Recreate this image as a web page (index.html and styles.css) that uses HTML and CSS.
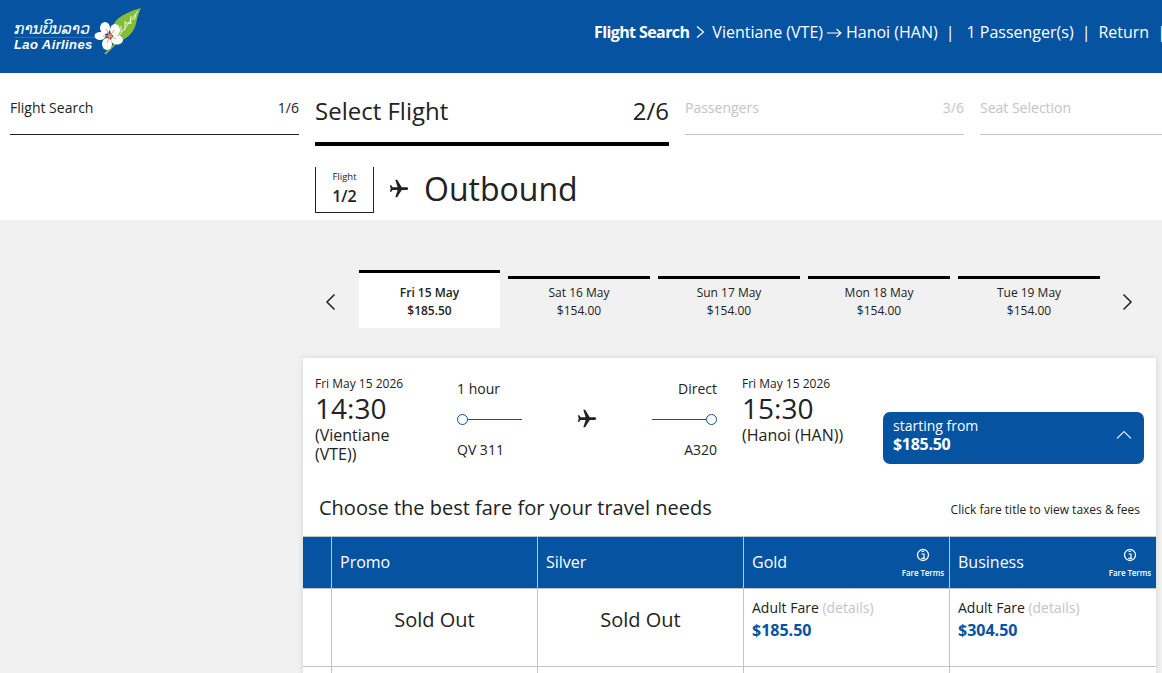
FILE: index.html
```html
<!DOCTYPE html>
<html lang="en">
<head>
  <meta charset="UTF-8" />
  <title>Lao Airlines - Select Flight</title>
  <link rel="stylesheet" href="styles.css">
</head>
<body>
  <header class="topbar">
    <div class="logo">
      <div class="logo-text">
        <span class="logo-lao" lang="lo">ການບິນລາວ</span>
        <span class="logo-en">Lao Airlines</span>
      </div>
      <svg class="logo-mark" width="50" height="50" viewBox="0 0 50 50">
        <path d="M26 32 11 47" stroke="#7cb83e" stroke-width="2"/>
        <path d="M47 1C36 4 25 9 21 15c-3 5-3 12-1 17l6 2c9-3 14-10 16-17 1-6 3-12 5-16z" fill="#86bc3c"/>
        <path d="M44 4 24 30M37 9l-1 8M31 14v9M27 19v6M38 16h-7M42 8l-2 5" stroke="#eef6d8" stroke-width="1" fill="none"/>
        <g fill="#fff">
          <ellipse cx="11" cy="21" rx="5" ry="6"/>
          <ellipse cx="21" cy="23" rx="5" ry="6"/>
          <ellipse cx="6" cy="29" rx="5.500" ry="4"/>
          <ellipse cx="13" cy="37" rx="5" ry="6"/>
          <ellipse cx="23" cy="33" rx="6" ry="4.500"/>
        </g>
        <circle cx="16" cy="29" r="2.500" fill="#e8483a"/>
        <path d="M16 29 12 22M16 29l4-6M16 29l-3 7M16 29l6 3M16 29H9" stroke="#f4a06e" stroke-width="1"/>
      </svg>
    </div>
    <nav class="crumbs">
      <b>Flight Search</b>
      <svg class="crumb-chev" width="9" height="14" viewBox="0 0 9 14"><path d="M1 1.500 7.500 7 1 12.500" fill="none" stroke="#fff" stroke-width="1.200"/></svg>
      <span class="crumb-route">Vientiane (VTE)
        <svg class="crumb-arrow" width="15" height="10" viewBox="0 0 15 10"><path d="M0 5h14M9.500 1 14 5 9.500 9" fill="none" stroke="#fff" stroke-width="1.100"/></svg>
        Hanoi (HAN)</span>
      <span class="crumb-sep">|</span>
      <span class="crumb-pax">1 Passenger(s)</span>
      <span class="crumb-sep">|</span>
      <span>Return</span>
      <span class="crumb-sep">|</span>
    </nav>
  </header>

  <section class="top-panel">
    <div class="steps">
      <div class="step step-done"><span>Flight Search</span><span>1/6</span></div>
      <div class="step step-active"><span>Select Flight</span><span>2/6</span></div>
      <div class="step step-next"><span>Passengers</span><span>3/6</span></div>
      <div class="step step-next"><span>Seat Selection</span></div>
    </div>
    <div class="leg-title">
      <div class="leg-box">
        <small>Flight</small>
        <strong>1/2</strong>
      </div>
      <svg class="leg-plane" width="22" height="22" viewBox="0 0 24 24"><path transform="rotate(90 12 12)" d="M21 16v-2l-8-5V3.500c0-.83-.67-1.500-1.500-1.500S10 2.670 10 3.500V9l-8 5v2l8-2.500V19l-2 1.500V22l3.500-1 3.500 1v-1.500L13 19v-5.500l8 2.500z" fill="#222"/></svg>
      <h1>Outbound</h1>
    </div>
  </section>

  <main class="content">
    <div class="dates">
      <svg class="date-arrow" width="12" height="18" viewBox="0 0 12 18"><path d="M9.500 1.500 2 9l7.500 7.500" fill="none" stroke="#222" stroke-width="1.500"/></svg>
      <div class="date-tab date-tab-active"><span>Fri 15 May</span><span>$185.50</span></div>
      <div class="date-tab"><span>Sat 16 May</span><span>$154.00</span></div>
      <div class="date-tab"><span>Sun 17 May</span><span>$154.00</span></div>
      <div class="date-tab"><span>Mon 18 May</span><span>$154.00</span></div>
      <div class="date-tab"><span>Tue 19 May</span><span>$154.00</span></div>
      <svg class="date-arrow" width="12" height="18" viewBox="0 0 12 18"><path d="M2.500 1.500 10 9l-7.500 7.500" fill="none" stroke="#222" stroke-width="1.500"/></svg>
    </div>

    <article class="card">
      <div class="flight">
        <div class="endpoint endpoint-from">
          <div class="ep-date">Fri May 15 2026</div>
          <div class="ep-time">14:30</div>
          <div class="ep-place">(Vientiane (VTE))</div>
        </div>

        <div class="path">
          <div class="path-row"><span>1 hour</span><span>Direct</span></div>
          <div class="path-line">
            <span class="dot"></span><span class="line"></span>
            <svg width="22" height="22" viewBox="0 0 24 24"><path transform="rotate(90 12 12)" d="M21 16v-2l-8-5V3.500c0-.83-.67-1.500-1.500-1.500S10 2.670 10 3.500V9l-8 5v2l8-2.500V19l-2 1.500V22l3.500-1 3.500 1v-1.500L13 19v-5.500l8 2.500z" fill="#222"/></svg>
            <span class="line"></span><span class="dot"></span>
          </div>
          <div class="path-row"><span>QV 311</span><span>A320</span></div>
        </div>

        <div class="endpoint endpoint-to">
          <div class="ep-date">Fri May 15 2026</div>
          <div class="ep-time">15:30</div>
          <div class="ep-place">(Hanoi (HAN))</div>
        </div>

        <button class="price-btn" type="button">
          <span class="price-text">
            <span>starting from</span>
            <b>$185.50</b>
          </span>
          <svg width="16" height="10" viewBox="0 0 16 10"><path d="M1 8.500 8 1.500l7 7" fill="none" stroke="#dfe8f3" stroke-width="1.100"/></svg>
        </button>
      </div>

      <div class="fare-head">
        <h2>Choose the best fare for your travel needs</h2>
        <span>Click fare title to view taxes &amp; fees</span>
      </div>

      <div class="fares">
        <div class="fh fh-empty"></div>
        <div class="fh">Promo</div>
        <div class="fh">Silver</div>
        <div class="fh">Gold
          <span class="terms">
            <svg width="14" height="14" viewBox="0 0 14 14"><circle cx="7" cy="7" r="5.500" fill="none" stroke="#fff" stroke-width="1.300"/><path d="M5.500 3.500h2.500M5.500 6h2.500v4M5.200 10.300h4" fill="none" stroke="#fff" stroke-width="1.200"/></svg>
            Fare Terms
          </span>
        </div>
        <div class="fh">Business
          <span class="terms">
            <svg width="14" height="14" viewBox="0 0 14 14"><circle cx="7" cy="7" r="5.500" fill="none" stroke="#fff" stroke-width="1.300"/><path d="M5.500 3.500h2.500M5.500 6h2.500v4M5.200 10.300h4" fill="none" stroke="#fff" stroke-width="1.200"/></svg>
            Fare Terms
          </span>
        </div>

        <div class="fc"></div>
        <div class="fc fc-sold">Sold Out</div>
        <div class="fc fc-sold">Sold Out</div>
        <div class="fc">
          <div class="fare-label">Adult Fare <em>(details)</em></div>
          <div class="fare-price">$185.50</div>
        </div>
        <div class="fc">
          <div class="fare-label">Adult Fare <em>(details)</em></div>
          <div class="fare-price">$304.50</div>
        </div>

        <div class="fc fc-next"></div>
        <div class="fc fc-next"></div>
        <div class="fc fc-next"></div>
        <div class="fc fc-next"></div>
        <div class="fc fc-next"></div>
      </div>
    </article>
  </main>
</body>
</html>
```

FILE: styles.css
```css
html, body {
  margin: 0;
  height: 673px;
  overflow: hidden;
}
body {
  font-family: "Open Sans", sans-serif;
  background: #f1f1f1;
  color: #222;
}

/* top bar */
.topbar {
  height: 73px;
  background: #0553a1;
  color: #fff;
  display: flex;
  justify-content: space-between;
  overflow: hidden;
}
.logo {
  display: flex;
  align-items: flex-start;
  padding: 7px 0 0 14px;
}
.logo-text {
  display: flex;
  flex-direction: column;
  padding-top: 14px;
  width: 81px;
}
.logo-lao {
  font-family: "DejaVu Sans", sans-serif;
  font-style: italic;
  font-size: 15.500px;
  line-height: 16px;
  border-bottom: 1px solid #a8425a;
  white-space: nowrap;
}
.logo-en {
  font-family: "Liberation Sans", sans-serif;
  font-weight: bold;
  font-style: italic;
  font-size: 13px;
  letter-spacing: 0.400px;
  line-height: 14px;
  white-space: nowrap;
}
.logo-mark {
  margin-left: -1px;
}
.crumbs {
  display: flex;
  align-items: center;
  flex: none;
  width: 568px;
  height: 64px;
  font-size: 16px;
  white-space: nowrap;
}
.crumbs b {
  font-weight: 700;
  letter-spacing: -0.600px;
}
.crumb-chev {
  flex: none;
  margin: 0 7px;
}
.crumb-route {
  display: flex;
  align-items: center;
  gap: 4px;
}
.crumb-arrow {
  flex: none;
  margin-top: 1px;
}
.crumb-sep {
  margin: 0 8px;
}
.crumb-pax {
  margin-left: 4px;
}

/* white panel */
.top-panel {
  background: #fff;
  height: 147px;
  overflow: hidden;
}
.steps {
  display: flex;
  gap: 16px;
  padding-left: 10px;
  align-items: flex-start;
}
.step {
  flex: none;
  display: flex;
  justify-content: space-between;
  align-items: center;
  box-sizing: border-box;
  width: 289px;
  height: 62px;
  padding-top: 8px;
  font-size: 14px;
  border-bottom: 1px solid #222;
}
.step-active {
  width: 354px;
  height: 73px;
  font-size: 24px;
  padding-top: 6px;
  border-bottom: 4px solid #000;
}
.step-next {
  width: 279px;
  color: #c4c4c4;
  border-bottom-color: #c4c4c4;
}
.leg-title {
  display: flex;
  align-items: center;
  height: 46px;
  margin: 21px 0 0 315px;
}
.leg-box {
  box-sizing: border-box;
  width: 59px;
  height: 46px;
  border: 1px solid #222;
  border-top: none;
  text-align: center;
}
.leg-box small {
  display: block;
  font-size: 9.500px;
  line-height: 12px;
  padding-top: 4px;
}
.leg-box strong {
  display: block;
  margin-top: 2px;
  font-size: 16px;
  font-weight: 600;
  line-height: 22px;
}
.leg-plane {
  margin: 0 0 2px 14px;
}
.leg-title h1 {
  margin: 0 0 2px 14px;
  font-size: 32px;
  font-weight: 400;
  line-height: 42px;
}

/* content column */
.content {
  margin-left: 303px;
  width: 853px;
}
.dates {
  display: flex;
  align-items: flex-start;
  height: 138px;
  padding-top: 50px;
  box-sizing: border-box;
}
.date-arrow {
  flex: none;
  margin: 23px 22px 0;
}
.date-arrow:last-child {
  margin: 23px 0 0 21px;
}
.date-tab {
  flex: none;
  width: 142px;
  margin: 6px 8px 0 0;
  padding-top: 5px;
  height: 46px;
  border-top: 3px solid #000;
  display: flex;
  flex-direction: column;
  align-items: center;
  font-size: 12px;
  line-height: 18px;
}
.date-tab:nth-last-child(2) {
  margin-right: 0;
}
.date-tab-active {
  width: 141px;
  height: 44px;
  margin-top: 0;
  padding-top: 11px;
  background: #fff;
  font-weight: 600;
}

/* flight card */
.card {
  background: #fff;
  box-shadow: 0 0 6px rgba(0, 0, 0, 0.12);
  height: 320px;
}
.flight {
  display: flex;
  height: 118px;
  padding: 17px 12px 0;
  box-sizing: border-box;
}
.endpoint {
  flex: none;
}
.endpoint-from {
  width: 142px;
}
.endpoint-to {
  width: 141px;
  margin-left: 25px;
}
.ep-date {
  font-size: 12px;
  line-height: 17px;
}
.ep-time {
  font-size: 28px;
  line-height: 32px;
  margin-bottom: 2px;
}
.ep-place {
  font-size: 16px;
  line-height: 19px;
  width: 100px;
}
.endpoint-to .ep-place {
  width: auto;
}
.path {
  flex: none;
  width: 260px;
  font-size: 14px;
}
.path-row {
  display: flex;
  justify-content: space-between;
  line-height: 19px;
  margin-top: 4px;
}
.path-line {
  display: flex;
  align-items: center;
  height: 22px;
  margin: 10px 0 10px;
}
.path-line svg {
  margin: 0 54px;
  flex: none;
}
.line {
  width: 54px;
  flex: none;
  height: 1px;
  background: #0553a1;
}
.dot {
  flex: none;
  box-sizing: border-box;
  width: 11px;
  height: 11px;
  border: 1.500px solid #0553a1;
  border-radius: 50%;
}
.price-btn {
  display: flex;
  align-items: center;
  justify-content: space-between;
  box-sizing: border-box;
  width: 261px;
  height: 52px;
  margin: 37px 0 0 0;
  padding: 0 12px 7px 10px;
  border: none;
  border-radius: 7px;
  background: #0553a1;
  color: #fff;
  font-family: inherit;
  text-align: left;
}
.price-text {
  display: flex;
  flex-direction: column;
  font-size: 14px;
  line-height: 18px;
}
.price-text b {
  font-size: 16px;
  font-weight: 700;
  letter-spacing: -0.300px;
}
.fare-head {
  display: flex;
  justify-content: space-between;
  align-items: center;
  height: 60px;
  padding: 3px 16px 0;
  box-sizing: border-box;
}
.fare-head h2 {
  margin: 0;
  font-size: 20px;
  font-weight: 400;
}
.fare-head span {
  font-size: 12px;
  margin-top: 4px;
}

/* fare table */
.fares {
  display: grid;
  grid-template-columns: 29px 206px 206px 206px 206px;
  grid-template-rows: 52px 78px 30px;
  border-top: 1px solid #c4c4c4;
}
.fh {
  position: relative;
  box-sizing: border-box;
  display: flex;
  align-items: center;
  padding: 0 0 2px 8px;
  background: #0553a1;
  color: #fff;
  font-size: 16px;
  border-right: 1px solid #c4c4c4;
  border-bottom: 1px solid #c4c4c4;
}
.fh:nth-child(5) {
  border-right: none;
}
.terms {
  position: absolute;
  top: 11px;
  right: 5px;
  display: flex;
  flex-direction: column;
  align-items: center;
  font-size: 8px;
  font-weight: 600;
  letter-spacing: -0.100px;
  line-height: 12px;
  gap: 5px;
}
.fc {
  box-sizing: border-box;
  padding: 9px 8px 0;
  border-right: 1px solid #c4c4c4;
  border-bottom: 1px solid #c4c4c4;
}
.fc:nth-child(5n) {
  border-right: none;
}
.fc-next {
  border-bottom: none;
}
.fc-sold {
  padding-top: 16px;
  text-align: center;
  font-size: 20px;
  line-height: 30px;
}
.fare-label {
  font-size: 14px;
  line-height: 20px;
}
.fare-label em {
  font-style: normal;
  color: #c4c4c4;
}
.fare-price {
  font-size: 16px;
  font-weight: 700;
  line-height: 24px;
  color: #0553a1;
}
```
